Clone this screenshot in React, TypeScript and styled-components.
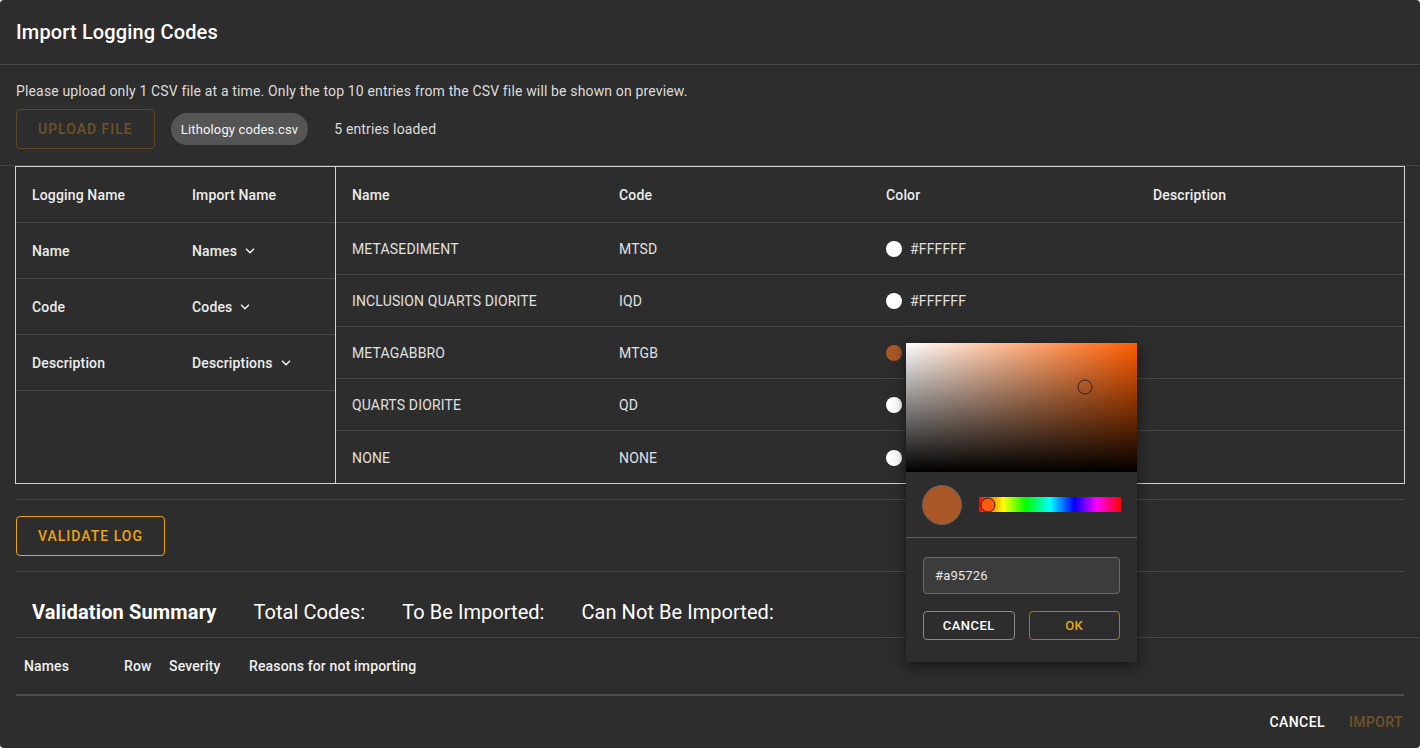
import styled, { createGlobalStyle } from "styled-components";

const GlobalStyle = createGlobalStyle`
  html, body {
    margin: 0;
    padding: 0;
    background: #ffffff;
  }
  * {
    box-sizing: border-box;
  }
  body {
    font-family: Roboto, "Liberation Sans", Arial, sans-serif;
    letter-spacing: 0.15px;
  }
`;

const GOLD = "#eaa318";
const GOLD_DIM = "#6d5429";
const LINE = "#474747";

const Dialog = styled.div`
  width: 1420px;
  height: 748px;
  background: #2d2d2d;
  border-radius: 4px;
  overflow: hidden;
  display: flex;
  flex-direction: column;
  color: #e4e4e4;
`;

const Header = styled.div`
  height: 65px;
  flex-shrink: 0;
  padding: 0 16px;
  display: flex;
  align-items: center;
  border-bottom: 1px solid ${LINE};
  font-size: 20px;
  font-weight: 500;
  color: #ffffff;
`;

const UploadSection = styled.div`
  padding: 18px 16px 16px;
  border-bottom: 1px solid ${LINE};
  display: flex;
  flex-direction: column;
  gap: 10px;
`;

const Hint = styled.div`
  font-size: 14px;
  line-height: 16px;
  color: #dcdcdc;
`;

const UploadRow = styled.div`
  display: flex;
  align-items: center;
  height: 40px;
  gap: 16px;
`;

const OutlineButton = styled.button<{ $tone: "gold" | "dim" | "grey" }>`
  height: 40px;
  padding: 0 21px;
  background: transparent;
  border-radius: 4px;
  font-family: inherit;
  font-size: 14px;
  font-weight: 500;
  letter-spacing: 1px;
  text-transform: uppercase;
  cursor: pointer;
  border: 1px solid
    ${(p) => (p.$tone === "gold" ? GOLD : p.$tone === "dim" ? "#5c4725" : "#8a8a8a")};
  color: ${(p) => (p.$tone === "gold" ? GOLD : p.$tone === "dim" ? GOLD_DIM : "#ffffff")};
`;

const Chip = styled.div`
  height: 32px;
  padding: 0 10px;
  border-radius: 16px;
  background: #555555;
  color: #f4f4f4;
  font-size: 13px;
  display: flex;
  align-items: center;
`;

const LoadedText = styled.span`
  font-size: 14px;
  color: #dcdcdc;
  margin-left: 10px;
`;

const Tables = styled.div`
  margin: 0 15px;
  flex-shrink: 0;
  border: 1px solid #d4d4d4;
  display: grid;
  grid-template-columns: 320px 1fr;
  height: 318px;
`;

const MappingPane = styled.div`
  border-right: 1px solid #d4d4d4;
  display: flex;
  flex-direction: column;
`;

const MappingRow = styled.div`
  height: 56px;
  padding-top: 1px;
  display: grid;
  grid-template-columns: 160px 160px;
  align-items: center;
  border-bottom: 1px solid ${LINE};
  font-size: 14px;
  font-weight: 500;
  color: #ececec;
`;

const Cell = styled.div`
  padding: 0 16px;
  display: flex;
  align-items: center;
  gap: 8px;
`;

const PreviewPane = styled.div`
  display: flex;
  flex-direction: column;
`;

const PreviewRow = styled.div<{ $head?: boolean }>`
  height: ${(p) => (p.$head ? "56px" : "52px")};
  padding-top: 1px;
  display: grid;
  grid-template-columns: repeat(4, 1fr);
  align-items: center;
  font-size: 14px;
  font-weight: ${(p) => (p.$head ? 500 : 400)};
  color: ${(p) => (p.$head ? "#ececec" : "#e0e0e0")};
  border-bottom: 1px solid ${LINE};
  &:last-child {
    border-bottom: none;
  }
`;

const ColorCell = styled(Cell)`
  position: relative;
  align-self: stretch;
`;

const Dot = styled.span<{ $color: string }>`
  width: 16px;
  height: 16px;
  border-radius: 50%;
  background: ${(p) => p.$color};
  flex-shrink: 0;
`;

const Divider = styled.div<{ $full?: boolean; $thick?: boolean }>`
  flex-shrink: 0;
  margin: 0 ${(p) => (p.$full ? "0" : "16px")} 0 16px;
  height: ${(p) => (p.$thick ? "2px" : "1px")};
  background: ${(p) => (p.$thick ? "#4c4c4c" : LINE)};
`;

const ValidateArea = styled.div`
  padding: 16px 16px 15px;
`;

const SummaryRow = styled.div`
  height: 65px;
  flex-shrink: 0;
  padding: 26px 32px 0;
  display: flex;
  align-items: flex-start;
  gap: 37px;
  font-size: 20px;
  line-height: 28px;
  letter-spacing: 0.05px;
  color: #ffffff;
`;

const SummaryTitle = styled.span`
  font-weight: 700;
  letter-spacing: 0.15px;
`;

const ResultHead = styled.div`
  height: 56px;
  flex-shrink: 0;
  margin: 0 16px;
  padding-left: 8px;
  display: grid;
  grid-template-columns: 100px 45px 80px 1fr;
  align-items: center;
  font-size: 14px;
  font-weight: 500;
  color: #f0f0f0;
`;

const Footer = styled.div`
  flex: 1;
  display: flex;
  align-items: center;
  justify-content: flex-end;
  gap: 24px;
  padding: 0 17px 0 0;
`;

const TextButton = styled.button<{ $disabled?: boolean }>`
  background: transparent;
  border: none;
  padding: 0;
  font-family: inherit;
  font-size: 14px;
  font-weight: 500;
  letter-spacing: 0.4px;
  color: ${(p) => (p.$disabled ? GOLD_DIM : "#ffffff")};
`;

/* colour picker popover */
const Picker = styled.div`
  position: absolute;
  left: 36px;
  top: 15px;
  width: 231px;
  background: #2d2d2d;
  box-shadow: 0 4px 14px rgba(0, 0, 0, 0.55);
  z-index: 5;
  padding-bottom: 22px;
`;

const Saturation = styled.div<{ $hue: number }>`
  position: relative;
  height: 129px;
  background: linear-gradient(to top, #000, rgba(0, 0, 0, 0)),
    linear-gradient(to right, #fff, hsl(${(p) => p.$hue}, 100%, 50%));
`;

const SatPointer = styled.span`
  position: absolute;
  width: 15px;
  height: 15px;
  border-radius: 50%;
  border: 1.5px solid #222;
  transform: translate(-50%, -50%);
`;

const SwatchRow = styled.div`
  height: 66px;
  padding: 0 16px;
  display: flex;
  align-items: center;
  gap: 17px;
  border-bottom: 1px solid #5e5e5e;
`;

const Swatch = styled.span<{ $color: string }>`
  width: 40px;
  height: 40px;
  border-radius: 50%;
  background: ${(p) => p.$color};
  border: 1px solid #666;
`;

const HueBar = styled.div`
  position: relative;
  flex: 1;
  height: 15px;
  background: linear-gradient(
    to right,
    #f00 0%,
    #ff0 17%,
    #0f0 33%,
    #0ff 50%,
    #00f 67%,
    #f0f 83%,
    #f00 100%
  );
`;

const HuePointer = styled.span`
  position: absolute;
  top: 50%;
  width: 15px;
  height: 15px;
  border-radius: 50%;
  border: 1.5px solid #222;
  background: #ff5a10;
  transform: translate(-50%, -50%);
`;

const PickerBody = styled.div`
  padding: 19px 17px 0 17px;
  display: flex;
  flex-direction: column;
  gap: 17px;
`;

const HexInput = styled.input`
  height: 37px;
  width: 100%;
  padding: 0 11px;
  background: #3c3c3c;
  border: 1px solid #6a6a6a;
  border-radius: 4px;
  color: #e8e8e8;
  font-family: inherit;
  font-size: 13px;
  letter-spacing: 0.15px;
  outline: none;
`;

const PickerActions = styled.div`
  display: grid;
  grid-template-columns: 1fr 1fr;
  gap: 14px;
  ${OutlineButton} {
    height: 29px;
    font-size: 13px;
    letter-spacing: 0.5px;
    padding: 0;
  }
`;

const OkButton = styled(OutlineButton)`
  border-color: #a07a22;
`;

const Chevron = () => (
  <svg width="10" height="6" viewBox="0 0 10 6" fill="none">
    <path d="M1.5 1.2l3.5 3.5 3.5-3.5" stroke="#e8e8e8" strokeWidth="1.6" strokeLinecap="round" strokeLinejoin="round" />
  </svg>
);

const mappings = [
  { logging: "Name", field: "Names" },
  { logging: "Code", field: "Codes" },
  { logging: "Description", field: "Descriptions" },
];

const rows = [
  { name: "METASEDIMENT", code: "MTSD", color: "#FFFFFF", label: "#FFFFFF" },
  { name: "INCLUSION QUARTS DIORITE", code: "IQD", color: "#FFFFFF", label: "#FFFFFF" },
  { name: "METAGABBRO", code: "MTGB", color: "#a95726", label: "", picker: true },
  { name: "QUARTS DIORITE", code: "QD", color: "#FFFFFF", label: "" },
  { name: "NONE", code: "NONE", color: "#FFFFFF", label: "" },
];

function ColorPicker({ value }: { value: string }) {
  return (
    <Picker>
      <Saturation $hue={22}>
        <SatPointer style={{ left: "77.5%", top: "34%" }} />
      </Saturation>
      <SwatchRow>
        <Swatch $color={value} />
        <HueBar>
          <HuePointer style={{ left: "6%" }} />
        </HueBar>
      </SwatchRow>
      <PickerBody>
        <HexInput defaultValue={value} />
        <PickerActions>
          <OutlineButton $tone="grey">Cancel</OutlineButton>
          <OkButton $tone="gold">OK</OkButton>
        </PickerActions>
      </PickerBody>
    </Picker>
  );
}

export default function App() {
  return (
    <>
      <GlobalStyle />
      <Dialog>
        <Header>Import Logging Codes</Header>
        <UploadSection>
          <Hint>
            Please upload only 1 CSV file at a time. Only the top 10 entries from the CSV file will be
            shown on preview.
          </Hint>
          <UploadRow>
            <OutlineButton $tone="dim">Upload File</OutlineButton>
            <Chip>Lithology codes.csv</Chip>
            <LoadedText>5 entries loaded</LoadedText>
          </UploadRow>
        </UploadSection>

        <Tables>
          <MappingPane>
            <MappingRow>
              <Cell>Logging Name</Cell>
              <Cell>Import Name</Cell>
            </MappingRow>
            {mappings.map((m) => (
              <MappingRow key={m.logging}>
                <Cell>{m.logging}</Cell>
                <Cell>
                  {m.field}
                  <Chevron />
                </Cell>
              </MappingRow>
            ))}
          </MappingPane>
          <PreviewPane>
            <PreviewRow $head>
              <Cell>Name</Cell>
              <Cell>Code</Cell>
              <Cell>Color</Cell>
              <Cell>Description</Cell>
            </PreviewRow>
            {rows.map((r) => (
              <PreviewRow key={r.name}>
                <Cell>{r.name}</Cell>
                <Cell>{r.code}</Cell>
                <ColorCell>
                  <Dot $color={r.color} />
                  {r.label && <span>{r.label}</span>}
                  {r.picker && <ColorPicker value={r.color} />}
                </ColorCell>
                <Cell />
              </PreviewRow>
            ))}
          </PreviewPane>
        </Tables>

        <Divider style={{ marginTop: 15 }} />
        <ValidateArea>
          <OutlineButton $tone="gold">Validate Log</OutlineButton>
        </ValidateArea>
        <Divider />
        <SummaryRow>
          <SummaryTitle>Validation Summary</SummaryTitle>
          <span>Total Codes:</span>
          <span>To Be Imported:</span>
          <span>Can Not Be Imported:</span>
        </SummaryRow>
        <Divider $full />
        <ResultHead>
          <span>Names</span>
          <span>Row</span>
          <span>Severity</span>
          <span>Reasons for not importing</span>
        </ResultHead>
        <Divider $thick />
        <Footer>
          <TextButton>CANCEL</TextButton>
          <TextButton $disabled>IMPORT</TextButton>
        </Footer>
      </Dialog>
    </>
  );
}
